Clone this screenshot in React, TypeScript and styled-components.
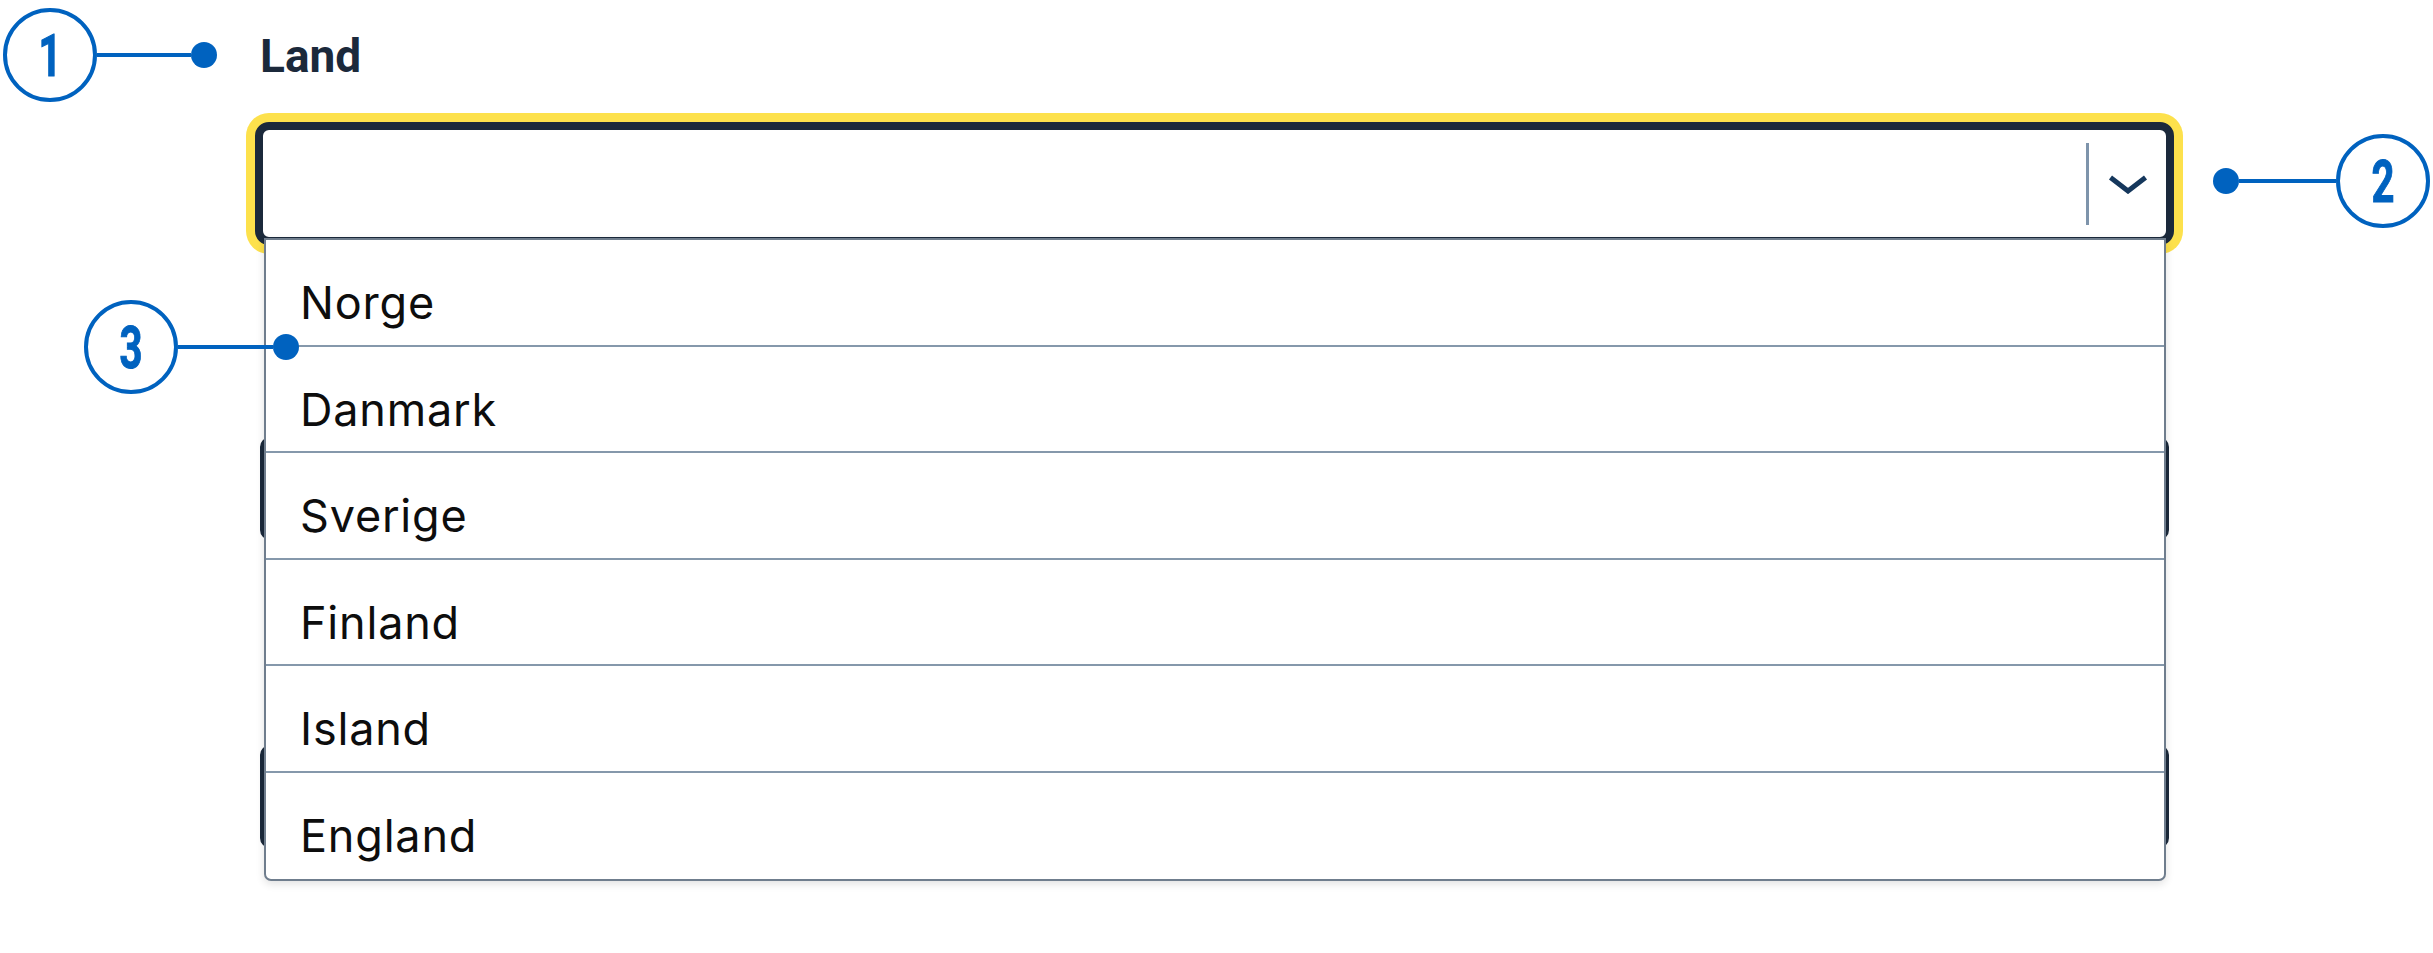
import React from "react";
import styled, { createGlobalStyle } from "styled-components";

const GlobalStyle = createGlobalStyle`
  html, body { margin: 0; padding: 0; background: #ffffff; }
  body { font-family: "Inter", "Liberation Sans", sans-serif; }
  *, *::before, *::after { box-sizing: border-box; }
`;

const BLUE = "#0062bf";
const NAVY = "#1b293b";

const Page = styled.main`
  position: relative;
  width: 2433px;
  height: 953px;
  overflow: hidden;
  padding: 28px 0 0 260px;
`;

const Form = styled.div`
  width: 1909px;
  display: flex;
  flex-direction: column;
`;

const Field = styled.div<{ $offset?: number; $open?: boolean }>`
  position: relative;
  z-index: ${(p) => (p.$open ? 5 : 1)};
  display: flex;
  flex-direction: column;
  margin-top: ${(p) => p.$offset ?? 0}px;
`;

const Label = styled.label<{ $hidden?: boolean }>`
  font-family: Roboto, "Liberation Sans", sans-serif;
  font-weight: 700;
  font-size: 46px;
  line-height: 56px;
  height: 56px;
  color: ${NAVY};
  margin-bottom: 38px;
  visibility: ${(p) => (p.$hidden ? "hidden" : "visible")};
`;

const SelectBox = styled.div<{ $focused?: boolean }>`
  position: relative;
  display: flex;
  align-items: center;
  justify-content: flex-end;
  height: ${(p) => (p.$focused ? 123 : 103)}px;
  margin: 0 ${(p) => (p.$focused ? -5 : 0)}px;
  border: ${(p) => (p.$focused ? 8 : 4)}px solid ${NAVY};
  border-radius: ${(p) => (p.$focused ? 14 : 10)}px;
  background: #ffffff;
  box-shadow: ${(p) => (p.$focused ? "0 0 0 9px #fde14c" : "none")};
`;

const Divider = styled.span`
  width: 3px;
  height: 82px;
  background: #7e94ab;
`;

const ChevronButton = styled.span`
  width: 77px;
  height: 100%;
  display: flex;
  align-items: center;
  justify-content: center;
`;

const Listbox = styled.ul`
  position: absolute;
  top: calc(100% + 1px);
  left: 1px;
  right: 0;
  margin: 0;
  padding: 0;
  list-style: none;
  background: #ffffff;
  border: 2px solid #6f7d8d;
  border-radius: 0 0 7px 7px;
  box-shadow: 0 3px 8px rgba(0, 0, 0, 0.12);
`;

const Option = styled.li`
  height: 106.5px;
  padding: 21px 0 0 34px;
  font-family: "Inter", "Liberation Sans", sans-serif;
  font-size: 45px;
  letter-spacing: 0.8px;
  line-height: 83.5px;
  color: #0d0d0d;
  border-bottom: 2px solid #8598ab;
  &:last-child {
    border-bottom: none;
  }
`;

const Callout = styled.div<{ $x: number; $y: number; $reverse?: boolean }>`
  position: absolute;
  left: ${(p) => p.$x}px;
  top: ${(p) => p.$y}px;
  z-index: 10;
  display: flex;
  flex-direction: ${(p) => (p.$reverse ? "row-reverse" : "row")};
  align-items: center;
`;

const Badge = styled.div`
  width: 94px;
  height: 94px;
  border: 4.5px solid ${BLUE};
  border-radius: 50%;
  background: #ffffff;
  display: flex;
  align-items: center;
  justify-content: center;
`;

const BadgeNumber = styled.span`
  display: inline-block;
  font-family: Roboto, "DejaVu Sans", sans-serif;
  font-weight: 700;
  font-size: 59px;
  line-height: 1;
  color: ${BLUE};
  transform: scaleX(0.68);
  -webkit-text-stroke: 1px ${BLUE};
`;

const Leader = styled.span<{ $length: number }>`
  width: ${(p) => p.$length}px;
  height: 4px;
  background: ${BLUE};
`;

const Dot = styled.span`
  width: 26px;
  height: 26px;
  border-radius: 50%;
  background: ${BLUE};
`;

const Chevron = () => (
  <svg width="40" height="20" viewBox="0 0 40 20" aria-hidden="true">
    <polyline
      points="2.5,3.5 20,17 37.5,3.5"
      fill="none"
      stroke="#15375c"
      strokeWidth="5"
      strokeLinejoin="miter"
    />
  </svg>
);

const countries = ["Norge", "Danmark", "Sverige", "Finland", "Island", "England"];

export default function App() {
  return (
    <>
      <GlobalStyle />
      <Page>
        <Form>
          <Field $open>
            <Label>Land</Label>
            <SelectBox $focused>
              <Divider />
              <ChevronButton>
                <Chevron />
              </ChevronButton>
              <Listbox role="listbox">
                {countries.map((c) => (
                  <Option key={c} role="option">
                    {c}
                  </Option>
                ))}
              </Listbox>
            </SelectBox>
          </Field>
          <Field $offset={98}>
            <Label $hidden>By</Label>
            <SelectBox />
          </Field>
          <Field $offset={111}>
            <Label $hidden>Postnummer</Label>
            <SelectBox />
          </Field>
        </Form>

        <Callout $x={3} $y={8}>
          <Badge>
            <BadgeNumber>1</BadgeNumber>
          </Badge>
          <Leader $length={94} />
          <Dot />
        </Callout>
        <Callout $x={2213} $y={134} $reverse>
          <Badge>
            <BadgeNumber>2</BadgeNumber>
          </Badge>
          <Leader $length={97} />
          <Dot />
        </Callout>
        <Callout $x={84} $y={300}>
          <Badge>
            <BadgeNumber>3</BadgeNumber>
          </Badge>
          <Leader $length={95} />
          <Dot />
        </Callout>
      </Page>
    </>
  );
}
